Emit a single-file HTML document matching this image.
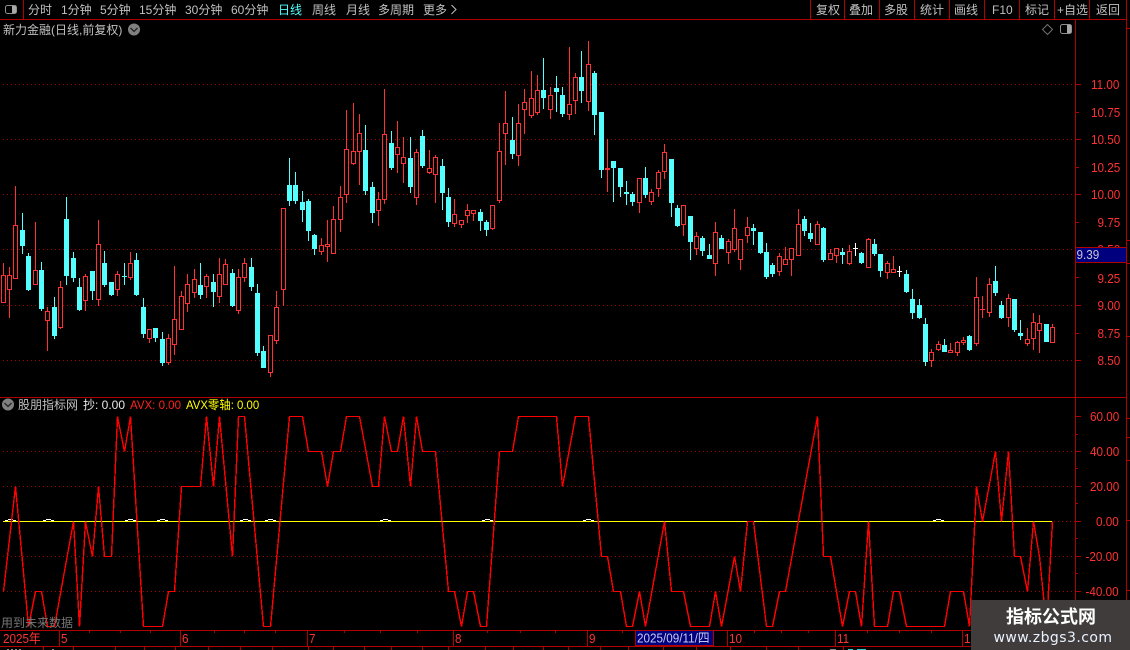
<!DOCTYPE html>
<html><head><meta charset="utf-8"><style>
html,body{margin:0;padding:0;background:#000;width:1130px;height:650px;overflow:hidden}
svg{display:block;position:absolute;left:0;top:0}
text{font-family:"Liberation Sans","Noto Sans CJK SC",sans-serif;font-size:12px;fill:#c0c0c0;white-space:pre}
.n{font-size:13px;fill:#ff3232}
.h{font-size:12px}
</style></head><body>
<svg id="s" width="1130" height="650" viewBox="0 0 1130 650">
<g id="grid" shape-rendering="crispEdges"></g>
<g id="candles" shape-rendering="crispEdges"></g>
<polyline id="zero" points="3,521.5 1052,521.5" stroke="#ffff00" stroke-width="1" fill="none" shape-rendering="crispEdges"/>
<g id="bumps" shape-rendering="crispEdges"></g>
<polyline id="avx" fill="none" stroke="#ff0000" stroke-width="1.4" shape-rendering="crispEdges"/>
<g id="frame" shape-rendering="crispEdges"></g>

<!-- top bar text -->
<text x="28" y="14">分时</text><text x="61" y="14">1分钟</text><text x="100" y="14">5分钟</text><text x="139" y="14">15分钟</text><text x="185" y="14">30分钟</text><text x="231" y="14">60分钟</text>
<text x="278" y="14" style="fill:#54ffff">日线</text><text x="312" y="14">周线</text><text x="346" y="14">月线</text><text x="378" y="14">多周期</text><text x="423" y="14">更多</text>
<polyline points="451.5,5 456,9.5 451.5,14" fill="none" stroke="#c0c0c0"/>
<text x="816" y="14">复权</text><text x="849" y="14">叠加</text><text x="884" y="14">多股</text><text x="920" y="14">统计</text><text x="954" y="14">画线</text><text x="992" y="14">F10</text><text x="1025" y="14">标记</text><text x="1057" y="14">+自选</text><text x="1096" y="14">返回</text>

<!-- icons -->
<rect x="5.5" y="5.5" width="11" height="8" rx="2" fill="none" stroke="#909090"/><rect x="12" y="6" width="4" height="7" fill="#a8a8a8"/>
<rect x="1060.5" y="24.5" width="11" height="9" rx="2" fill="none" stroke="#909090"/><rect x="1067" y="25" width="4" height="8" fill="#a8a8a8"/>
<polygon points="1047.5,24.5 1052.5,29.5 1047.5,34.5 1042.5,29.5" fill="none" stroke="#707070"/>
<circle cx="134" cy="29.5" r="6" fill="#808080"/><polyline points="130.5,28 134,31.5 137.5,28" fill="none" stroke="#222" stroke-width="1.3"/>
<circle cx="8" cy="404.5" r="6" fill="#808080"/><polyline points="4.5,403 8,406.5 11.5,403" fill="none" stroke="#222" stroke-width="1.3"/>

<text x="3" y="34">新力金融(日线,前复权)</text>
<text x="18" y="409">股朋指标网</text>
<text x="83" y="409" style="fill:#e8e8e8">抄: 0.00</text>
<text transform="translate(130,409) scale(.96,1)" style="fill:#ff2020">AVX: 0.00</text>
<text transform="translate(186,409) scale(.95,1)" style="fill:#ffff00">AVX零轴: 0.00</text>

<!-- price axis -->
<g>
<text class="n" transform="translate(1091,89) scale(.9,1)">11.00</text>
<text class="n" transform="translate(1091,117) scale(.9,1)">10.75</text>
<text class="n" transform="translate(1091,144) scale(.9,1)">10.50</text>
<text class="n" transform="translate(1091,172) scale(.9,1)">10.25</text>
<text class="n" transform="translate(1091,199) scale(.9,1)">10.00</text>
<text class="n" transform="translate(1097.5,227) scale(.9,1)">9.75</text>
<text class="n" transform="translate(1097.5,254) scale(.9,1)">9.50</text>
<text class="n" transform="translate(1097.5,283) scale(.9,1)">9.25</text>
<text class="n" transform="translate(1097.5,310) scale(.9,1)">9.00</text>
<text class="n" transform="translate(1097.5,338) scale(.9,1)">8.75</text>
<text class="n" transform="translate(1097.5,365) scale(.9,1)">8.50</text>
</g>
<rect x="1075.5" y="247.5" width="51" height="15" fill="#00007f" stroke="#b00000" shape-rendering="crispEdges"/>
<text class="n" transform="translate(1076.5,259) scale(.9,1)" style="fill:#c8c8d8">9.39</text>

<!-- indicator axis -->
<g>
<text class="n" transform="translate(1090,421) scale(.9,1)">60.00</text>
<text class="n" transform="translate(1090,456) scale(.9,1)">40.00</text>
<text class="n" transform="translate(1090,491) scale(.9,1)">20.00</text>
<text class="n" transform="translate(1096,526) scale(.9,1)">0.00</text>
<text class="n" transform="translate(1085.5,561) scale(.9,1)">-20.00</text>
<text class="n" transform="translate(1085.5,596) scale(.9,1)">-40.00</text>
</g>

<text x="1" y="627" style="fill:#777;font-size:12px">用到未来数据</text>

<!-- time axis -->
<text class="n" transform="translate(3,643) scale(.9,1)">2025年</text>
<text class="n" transform="translate(61,643) scale(.9,1)">5</text>
<text class="n" transform="translate(182,643) scale(.9,1)">6</text>
<text class="n" transform="translate(309,643) scale(.9,1)">7</text>
<text class="n" transform="translate(455,643) scale(.9,1)">8</text>
<text class="n" transform="translate(589,643) scale(.9,1)">9</text>
<rect x="635.5" y="630.5" width="78" height="15" fill="#00007f" stroke="#b00000" shape-rendering="crispEdges"/>
<text class="n" transform="translate(637,642.5) scale(.9,1)" style="fill:#c8c8e8">2025/09/11/四</text>
<text class="n" transform="translate(729,643) scale(.9,1)">10</text>
<text class="n" transform="translate(837,643) scale(.9,1)">11</text>
<text class="n" transform="translate(964,643) scale(.9,1)" >1</text>

<!-- watermark -->
<rect x="971" y="600" width="159" height="50" fill="#403c3b"/>
<text x="1051" y="623" text-anchor="middle" style="font-size:18px;font-weight:700;fill:#fff">指标公式网</text>
<text x="1053" y="642" text-anchor="middle" style="font-family:'DejaVu Sans',sans-serif;font-size:14px;letter-spacing:.45px;fill:#eaf2ff">www.zbgs3.com</text>
</svg>
<script>
var NS="http://www.w3.org/2000/svg";
function el(g,t,a){var e=document.createElementNS(NS,t);for(var k in a)e.setAttribute(k,a[k]);g.appendChild(e);return e}
function P(i){return Math.floor(3.2+6.36*i)}
var groups=[
[180,"r250,286,368,368 r262,286,331,413 r18,136,298,298 c99,150,198,222 c220,228,330,333 r126,271,314,314 c247,270,387,393 r381,394,422,513 c351,381,468,477 r304,322,443,447 c51,117,288,315 c216,234,294,306 c294,321,390,393 r282,289,362,393 c273,273,333,360 r120,193,359,378 c213,249,315,321 c306,306,345,348 r273,283,329,348 c250,289,290,315 r216,250,293,300 c219,240,345,348 c354,381,462,474 r447,448,476,489 c444,444,474,486 c456,477,549,558 r462,475,548,555 r258,418,494,525 r333,349,449,449 r282,313,371,396 r267,298,338,354 c249,315,345,357 r282,289,320,354 c282,306,336,381 r234,283,350,369 r237,253,314,314 c267,279,378,381 r267,292,392,402 r234,250,293,306 c234,261,321,333 c312,339,519,528 c498,513,564,564 r466,466,578,591 r333,382,482,492 r85,85,329,378"],
[80,"c234,315,363,378 c276,315,363,372 c333,366,390,426 c357,363,453,483 c462,465,507,525 r474,496,516,525 r420,492,500,546 r378,418,521,521 r318,352,419,456 r90,208,346,369 r69,214,251,255 r102,160,215,315 c135,210,333,345 c306,321,399,429 r336,358,392,438 r27,163,359,372 c153,189,264,270 r123,202,224,279 r171,232,251,309 c171,234,321,339 r207,217,353,375 c150,168,258,264 r210,265,278,282 r225,232,284,369 c237,258,339,390 c324,351,426,441 r357,403,433,441 r421,421,434,444 r372,391,407,429 r391,391,401,423 c387,396,423,453 c420,426,450,468"],
[35,"r510,510,581,584 r264,349,497,504 r168,265,296,390 c246,315,357,372 r207,265,362,393 r162,202,224,297 r108,190,242,249 r120,166,233,240 c69,165,189,222 r156,181,224,252 c123,159,171,231 c156,180,237,246 r36,208,239,255 r114,127,197,237 c48,126,168,204 r18,88,200,228 c108,114,240,300 c231,231,405,429 r312,399,405,471 c378,378,399,501 c399,399,456,486 c438,471,477,510 c471,477,501,513 r430,430,503,534 c396,429,480,489 r462,472,500,510 r405,412,461,486 r327,352,410,432 c372,372,504,546"],
[200,"c15,24,78,81 r16,16,74,108 c48,48,126,180 r97,109,146,165 c109,114,153,168 c132,165,177,177 r66,97,191,228 c105,114,147,147 r117,124,158,192 r27,85,149,156 r118,118,179,210 r51,82,109,129 c72,84,93,135 c96,96,159,162 c129,156,231,237 c189,195,222,231 r159,169,215,228 r141,178,194,194 r145,145,179,228 r27,73,167,167 c48,57,93,108 c69,99,117,126 r63,73,134,134 c81,84,180,186 r147,160,179,179 r145,145,167,189 c144,156,165,192 r135,154,191,195 w129,145,146,168 c156,159,189,192 r114,118,203,203 c117,132,162,168 c162,162,213,231 r183,190,220,237"],
[230,"r78,118,130,130 w108,124,125,141 c120,132,186,189 c177,207,249,267 c207,225,264,267 c264,282,396,408 r357,367,392,411 r333,343,361,363 c327,345,366,366 r339,361,368,369 r333,337,368,378 r321,331,339,345 c315,318,360,363 r141,202,341,347 r198,238,241,264 r144,163,250,261 c108,153,189,198 c213,225,264,267 r192,205,265,291 c207,207,300,306 c270,309,318,330 r294,328,342,348 r249,277,326,360 r255,280,304,369 c282,282,336,336 r282,292,338,338"]
];
var C={r:"#ff3232",c:"#54ffff",w:"#ffffff"},cg=document.getElementById("candles"),idx=0;
groups.forEach(function(g){var o=g[0];g[1].split(" ").forEach(function(s){
 var col=C[s[0]],v=s.slice(1).split(",").map(function(n){return Math.round(o+n/3)}),p=P(idx);
 var h=v[0],t=v[1],b=v[2],l=v[3];if(b<=t)b=t+1;
 if(l<b)l=b;if(h>t)h=t;
 el(cg,"rect",{x:p,y:h,width:1,height:Math.max(l-h,1),fill:col});
 if(s[0]=="r"&&b-t>2){el(cg,"rect",{x:p-2+.5,y:t+.5,width:4,height:b-t-1,fill:"#000",stroke:col,"stroke-width":1});}
 else if(s[0]=="w"){el(cg,"rect",{x:p-2,y:t,width:5,height:1,fill:col});}
 else el(cg,"rect",{x:p-2,y:t,width:5,height:b-t,fill:col});
 idx++;});});

var gr=document.getElementById("grid");
[84,139,194,249,305,360,451,486,556,591].forEach(function(y){el(gr,"line",{x1:3,x2:1075,y1:y+.5,y2:y+.5,stroke:"#a00000","stroke-dasharray":"1 3"})});
el(gr,"line",{x1:1054,x2:1075,y1:521.5,y2:521.5,stroke:"#a00000","stroke-dasharray":"1 3"});

var vals="0:-40 2:20 4:-60 5:-40 6:-40 7:-60 8:-60 11:0 12:-60 13:0 14:-20 15:20 16:-20 17:-20 18:60 19:40 20:60 22:-60 25:-60 26:-40 27:-40 28:20 31:20 32:60 33:20 34:60 36:-20 37:60 38:60 41:-60 42:-60 45:60 47:60 48:40 50:40 51:20 52:40 53:40 54:60 56:60 58:20 59:20 60:60 61:40 62:40 63:60 64:20 65:60 66:40 68:40 70:-40 71:-40 72:-60 73:-40 74:-40 75:-60 76:-60 78:40 80:40 81:60 87:60 88:20 90:60 92:60 94:-20 95:-20 96:-40 97:-40 98:-60 99:-60 100:-40 101:-60 104:0 105:-40 107:-40 108:-60 111:-60 112:-40 113:-60 115:-20 116:-40 117:0 118:0 120:-60 121:-60 122:-40 123:-40 128:60 129:-20 130:-20 132:-60 133:-40 134:-40 135:-60 136:0 137:-60 139:-60 140:-40 141:-40 142:-60 148:-60 149:-40 151:-40 152:-60 153:20 154:0 156:40 157:0 158:40 159:-20 160:-20 161:-40 162:0 163:-20 164:-60 165:0";
document.getElementById("avx").setAttribute("points",vals.split(" ").map(function(s){var a=s.split(":");return (P(+a[0])+.5)+","+(521.5-a[1]*1.75)}).join(" "));

var bg=document.getElementById("bumps");
[10,48,130,162,245,270,385,487,588,938].forEach(function(x){
 el(bg,"rect",{x:x-5,y:520,width:3,height:1,fill:"#fff"});el(bg,"rect",{x:x+3,y:520,width:3,height:1,fill:"#fff"});el(bg,"rect",{x:x-2,y:519,width:5,height:1,fill:"#fff"});});

var f=document.getElementById("frame"),R="#b00000";
function hl(x1,x2,y){el(f,"rect",{x:x1,y:y,width:x2-x1,height:1,fill:R})}
function vl(x,y1,y2){el(f,"rect",{x:x,y:y1,width:1,height:y2-y1,fill:R})}
hl(0,1126,19);hl(0,1126,397);hl(0,1075,630);hl(0,1126,646);
vl(23,0,19);[810,844,879,914,949,984,1019,1054,1089].forEach(function(x){vl(x,0,19)});
vl(1075,19,650);vl(1126,0,650);
[84,139,194,249,305,360].forEach(function(y){hl(1075,1081,y)});
[112,167,222,277,333].forEach(function(y){hl(1075,1079,y)});
[416,451,486,521,556,591].forEach(function(y){hl(1075,1081,y)});
[434,468,503,538,573].forEach(function(y){hl(1075,1078,y)});
[59,180,307,453,587,727,835,962].forEach(function(x){vl(x,630,646)});
[89,120,150,214,244,275,344,380,417,487,520,555,622,754,781,808,867,899,931].forEach(function(x){vl(x,630,633)});
[43,73,115,144,175,208,240,272,308,333,364,391,422,448,485,513,543,568,600,628,663,696,730,766,798,843].forEach(function(x){vl(x,646,650)});
[240,263,336,418,437,460,520,590].forEach(function(y){hl(1127,1130,y)});
hl(1127,1130,28);
[[7,2,"#888"],[11,2,"#888"],[15,2,"#888"],[19,2,"#888"],[52,2,"#888"],[830,6,"#888"],[848,5,"#3cc"],[857,9,"#3cc"]].forEach(function(a){el(f,"rect",{x:a[0],y:649,width:a[1],height:1,fill:a[2]})});
</script>
</body></html>
